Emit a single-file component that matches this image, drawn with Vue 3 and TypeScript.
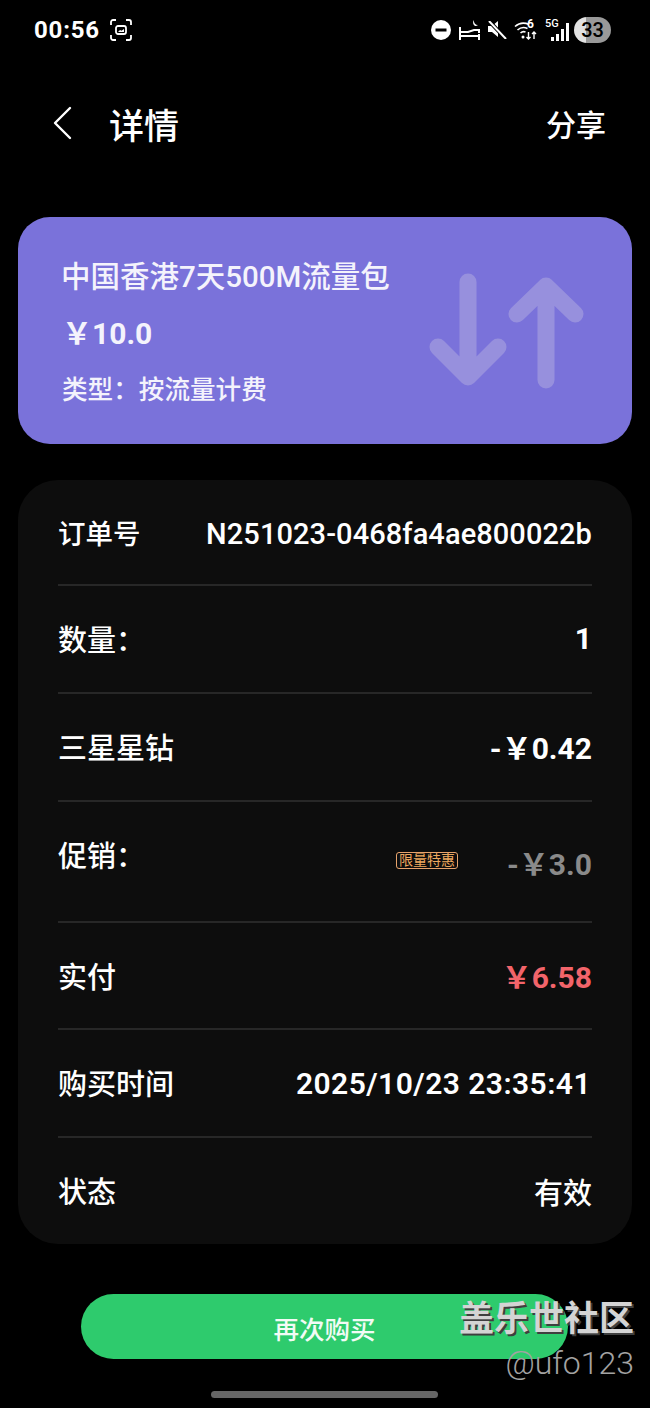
<script setup lang="ts">
type Row = {
  label: string
  value: string
  tone?: 'muted' | 'red'
  tag?: string
  kind?: string
}

// full-width colon and yen sign, as the app prints them
const colon = '\uFF1A'
const yen = '\uFFE5'

const rows: Row[] = [
  { label: '订单号', value: 'N251023-0468fa4ae800022b', kind: 'first' },
  { label: `数量${colon}`, value: '1' },
  { label: '三星星钻', value: `-${yen}0.42` },
  { label: `促销${colon}`, value: `-${yen}3.0`, tone: 'muted', tag: '限量特惠', kind: 'promo' },
  { label: '实付', value: `${yen}6.58`, tone: 'red', kind: 'paid' },
  { label: '购买时间', value: '2025/10/23 23:35:41', kind: 'time' },
  { label: '状态', value: '有效', kind: 'last' },
]
</script>

<template>
  <div class="page">
    <div class="status">
      <div class="status-left">
        <span class="clock">00:56</span>
        <svg class="shot" width="22" height="22" viewBox="0 0 22 22" fill="none" stroke="#fff" stroke-width="1.8">
          <path d="M1 6V3a2 2 0 0 1 2-2h3M16 1h3a2 2 0 0 1 2 2v3M21 16v3a2 2 0 0 1-2 2h-3M6 21H3a2 2 0 0 1-2-2v-3" />
          <rect x="6" y="7" width="10" height="8" rx="2" />
          <path d="M8 13l2-2 1.500 .8 2.500-1.800v3z" fill="#fff" stroke="none" />
        </svg>
      </div>
      <div class="status-right">
        <svg class="minus" width="20" height="20" viewBox="0 0 20 20">
          <circle cx="10" cy="10" r="10" fill="#fff" />
          <rect x="4.500" y="8.500" width="11" height="3" fill="#000" />
        </svg>
        <svg class="bed" width="21" height="20" viewBox="0 0 21 20" fill="none" stroke="#fff" stroke-width="2">
          <path d="M1 7v13M20 14v6M1 16h19M1 12h8l6-2h5v3" />
          <path d="M15 0a4 4 0 0 0 1 6 4 4 0 0 0 3-1 4 4 0 0 1-4-5z" fill="#fff" stroke="none" />
        </svg>
        <svg class="mute" width="19" height="18" viewBox="0 0 19 18">
          <path d="M0 5h4l6-5v16l-6-5H0z" fill="#fff" />
          <path d="M1 0l17 18" stroke="#000" stroke-width="4" />
          <path d="M1 0l17 18" stroke="#fff" stroke-width="2" />
        </svg>
        <span class="wifi">
          <svg width="23" height="20" viewBox="0 0 23 20" fill="none" stroke="#fff" stroke-width="1.600">
            <path d="M1 6.500a13 13 0 0 1 14-2M3.500 10a9 9 0 0 1 10-1.500M6.500 13a5 5 0 0 1 5-1" />
            <circle cx="9" cy="17" r="1.500" fill="#fff" stroke="none" />
            <path d="M14.500 12v7M12.500 17l2 2 2-2M20 19v-7M18 14l2-2 2 2" stroke-width="1.400" />
          </svg>
          <b>6</b>
        </span>
        <span class="signal">
          <b>5G</b>
          <i v-for="n in 4" :key="n" :class="'bar-' + n"></i>
        </span>
        <span class="battery">33</span>
      </div>
    </div>

    <header class="bar">
      <svg class="back" width="22" height="36" viewBox="0 0 22 36" fill="none" stroke="#fff" stroke-width="2.400" stroke-linecap="round" stroke-linejoin="round">
        <path d="M18 3L3 18l15 15" />
      </svg>
      <h1>详情</h1>
      <span class="share">分享</span>
    </header>

    <section class="plan">
      <div class="plan-text">
        <p class="plan-name">中国香港7天500M流量包</p>
        <p class="plan-price">{{ yen }}10.0</p>
        <p class="plan-type">类型{{ colon }}按流量计费</p>
      </div>
      <svg class="arrows" width="156" height="116" viewBox="0 0 156 116" fill="none" stroke="#9790dd" stroke-width="17" stroke-linecap="round" stroke-linejoin="round">
        <path d="M40 9v95M10 74l30 30 30-30" />
        <path d="M118 107V13M89 41l29-28 29 28" />
      </svg>
    </section>

    <section class="details">
      <div v-for="row in rows" :key="row.label" class="row" :class="row.kind">
        <span class="label">{{ row.label }}</span>
        <span v-if="row.tag" class="tag">{{ row.tag }}</span>
        <span class="value" :class="row.tone">{{ row.value }}</span>
      </div>
    </section>

    <div class="action">
      <button class="buy" type="button">再次购买</button>
    </div>
    <div class="handle"></div>

    <div class="mark">
      <div class="mark-name">盖乐世社区</div>
      <div class="mark-user">@ufo123</div>
    </div>
  </div>
</template>

<style>
html,
body {
  margin: 0;
  background: #000;
}
</style>

<style scoped>
.page {
  position: relative;
  width: 650px;
  height: 1408px;
  overflow: hidden;
  background: #000;
  color: #fff;
  font-family: "Roboto", "Noto Sans CJK SC", sans-serif;
}

p,
h1 {
  margin: 0;
}

.status {
  height: 60px;
  display: flex;
  justify-content: space-between;
  align-items: center;
  padding: 0 39px 0 34px;
}

.status-left,
.status-right {
  display: flex;
  align-items: center;
}

.clock {
  font-size: 24px;
  font-weight: 700;
  letter-spacing: 0.8px;
}

.shot {
  margin-left: 10px;
}

.minus {
  margin-right: 8px;
}

.bed {
  margin-right: 8px;
}

.mute {
  margin-right: 7px;
}

.wifi {
  position: relative;
  width: 23px;
  height: 20px;
  margin-right: 8px;
}

.wifi svg {
  display: block;
}

.wifi b {
  position: absolute;
  top: -3px;
  right: 3px;
  font-size: 12px;
  line-height: 14px;
}

.signal {
  position: relative;
  display: flex;
  align-items: flex-end;
  gap: 2px;
  width: 24px;
  height: 22px;
  justify-content: flex-end;
  margin-right: 5px;
}

.signal b {
  position: absolute;
  top: -2px;
  left: 0;
  font-size: 11px;
  line-height: 13px;
  font-weight: 500;
}

.signal i {
  width: 3px;
  background: #fff;
}

.bar-1 {
  height: 4px;
}

.bar-2 {
  height: 7px;
}

.bar-3 {
  height: 12px;
}

.bar-4 {
  height: 18px;
}

.battery {
  width: 37px;
  height: 26px;
  border-radius: 13px;
  background: linear-gradient(90deg, #e2e2e2 33%, #999 33%);
  color: #000;
  font-size: 20px;
  font-weight: 500;
  line-height: 26px;
  text-align: center;
}

.bar {
  height: 130px;
  display: flex;
  align-items: center;
  padding: 0 44px 4px 52px;
  box-sizing: border-box;
}

.back {
  margin-right: 35px;
}

.bar h1 {
  flex: 1;
  font-size: 35px;
  font-weight: 500;
}

.share {
  font-size: 30px;
  font-weight: 500;
}

.plan {
  height: 227px;
  margin: 27px 18px 0;
  padding: 0 48px 0 45px;
  display: flex;
  align-items: center;
  justify-content: space-between;
  border-radius: 32px;
  background: #7a72da;
  color: #f4f3fc;
}

.plan-text {
  display: grid;
  gap: 16px;
  padding-top: 7px;
}

.plan-name {
  font-size: 29.5px;
  font-weight: 500;
  line-height: 41px;
  margin-left: -2px;
}

.plan-price {
  font-size: 30px;
  font-weight: 700;
  line-height: 40px;
  margin-left: -1px;
}

.plan-type {
  font-size: 25.6px;
  font-weight: 500;
  line-height: 41px;
  margin-left: -1px;
}

.details {
  margin: 36px 18px 0;
  padding: 0 40px;
  border-radius: 40px;
  background: #0d0d0d;
}

.row {
  display: flex;
  align-items: center;
  justify-content: space-between;
  border-bottom: 2px solid #272727;
  height: 106px;
}

.row.first {
  height: 104px;
}

.row.promo {
  height: 119px;
}

.row.paid {
  height: 105px;
}

.row.last {
  height: 106px;
  border-bottom: 0;
}

.label {
  font-size: 29px;
  font-weight: 500;
  margin-top: -2px;
}

.first .label {
  font-size: 27.5px;
  margin-top: 0;
}

.promo .label {
  margin-top: -16px;
}

.value {
  font-size: 30px;
  font-weight: 700;
  margin-top: -2px;
}

.first .value {
  font-size: 29px;
  font-weight: 500;
  letter-spacing: 0.08px;
  margin-top: 0;
  padding-top: 3px;
}

.time .value {
  font-size: 30px;
  font-weight: 600;
  letter-spacing: 0.45px;
  margin-top: 0;
  padding: 1px 1px 0 0;
}

.last .value {
  font-size: 29px;
  font-weight: 500;
  margin-top: 0;
}

.value.muted {
  color: #8a8a8a;
  margin-top: 0;
}

.value.red {
  color: #f2646a;
}

.tag {
  margin-left: auto;
  margin-right: 49px;
  margin-bottom: 2px;
  padding: 0 2px;
  height: 15px;
  line-height: 15px;
  border: 1px solid #e8a36c;
  border-radius: 3px;
  color: #eda85f;
  font-size: 14px;
}

.action {
  display: flex;
  justify-content: center;
  margin-top: 50px;
}

.buy {
  width: 487px;
  height: 65px;
  border: 0;
  border-radius: 33px;
  background: #2ecb6d;
  color: #f2fbf5;
  font-family: inherit;
  font-size: 25.5px;
  font-weight: 500;
  padding: 2px 0 0;
  margin-right: 1px;
}

.handle {
  width: 227px;
  height: 7px;
  margin: 32px 0 0 211px;
  border-radius: 4px;
  background: #666;
}

.mark {
  position: absolute;
  right: 16px;
  top: 1299px;
  text-align: right;
}

.mark-name {
  font-size: 35px;
  font-weight: 700;
  line-height: 42px;
  color: #d4d4d4;
  text-shadow: 2px 2px 0 #3f3f3f;
}

.mark-user {
  font-size: 32px;
  line-height: 44px;
  color: #a3a3a3;
  font-weight: 300;
}
</style>
